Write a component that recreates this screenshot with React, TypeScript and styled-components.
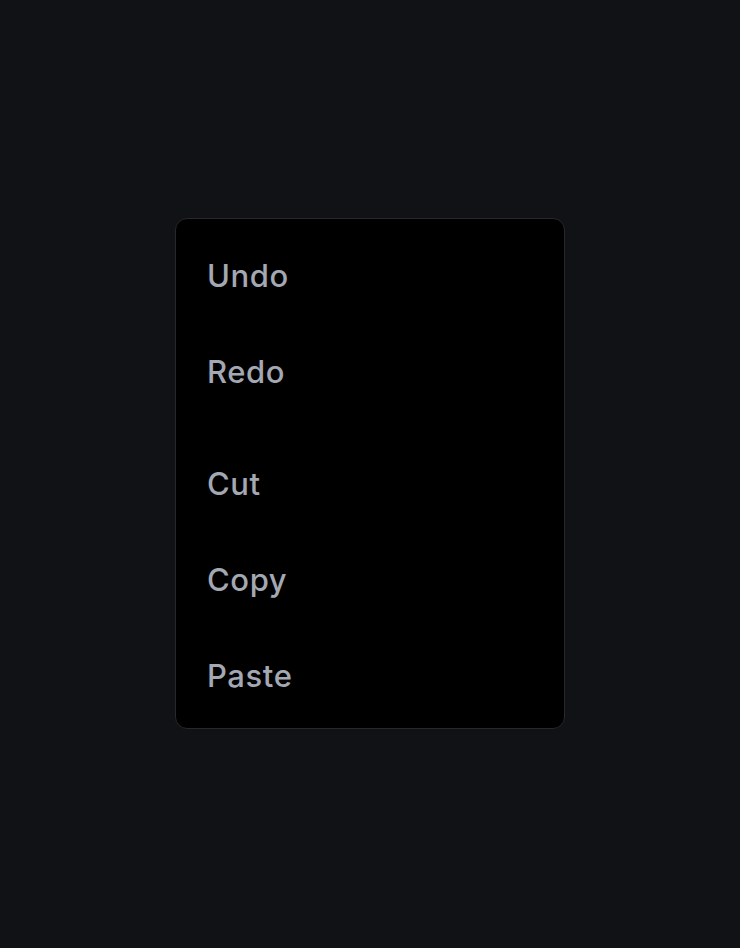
import * as React from 'react';
import styled, { createGlobalStyle } from 'styled-components';

const GlobalStyle = createGlobalStyle`
  html, body {
    margin: 0;
    padding: 0;
    background: #111216;
  }
  body {
    font-family: Inter, "Noto Sans", sans-serif;
  }
`;

const groups = [
  ['Undo', 'Redo'],
  ['Cut', 'Copy', 'Paste'],
];

export default function App() {
  return (
    <>
      <GlobalStyle />
      <Page>
        <Menu role="menu">
          {groups.map((group, i) => (
            <Group key={i}>
              {group.map((label) => (
                <MenuItem key={label} role="menuitem">
                  {label}
                </MenuItem>
              ))}
            </Group>
          ))}
        </Menu>
      </Page>
    </>
  );
}

const Page = styled.div`
  width: 740px;
  height: 948px;
  display: flex;
  justify-content: center;
  padding-top: 218px;
  box-sizing: border-box;
`;

const Menu = styled.div`
  width: 390px;
  height: 511px;
  box-sizing: border-box;
  background: #000;
  border: 1px solid #26282d;
  border-radius: 12px;
  padding: 8px 0 5px;
  display: flex;
  flex-direction: column;
  gap: 16px;
`;

const Group = styled.div`
  display: flex;
  flex-direction: column;
`;

const MenuItem = styled.div`
  height: 96px;
  display: flex;
  align-items: center;
  padding: 0 31px;
  font-size: 31px;
  font-weight: 500;
  letter-spacing: 0.6px;
  color: #a3a8b3;
  cursor: default;
`;
